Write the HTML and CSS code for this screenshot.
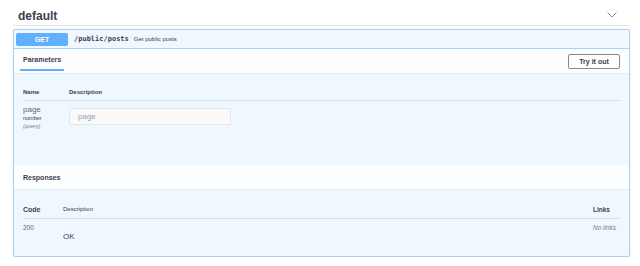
FILE: index.html
```html
<!DOCTYPE html>
<html lang="en">
<head>
    <meta charset="UTF-8">
    <title>Swagger - default</title>
    <link rel="stylesheet" href="styles.css">
</head>
<body>
    <div class="wrapper">
        <!-- tag header -->
        <h3 class="tag">
            <span class="tag-name">default</span>
            <svg class="chevron" width="10" height="6" viewBox="0 0 10 6" fill="none">
                <path d="M0.5 0.5L5 5L9.5 0.5" stroke="#6b6f78" stroke-width="0.8"/>
            </svg>
        </h3>

        <!-- GET /public/posts -->
        <div class="opblock">
            <div class="summary">
                <span class="method">GET</span>
                <span class="path">/public/posts</span>
                <span class="summary-desc">Get public posts</span>
            </div>

            <div class="section-header">
                <div class="tab">Parameters</div>
                <button class="try-out">Try it out</button>
            </div>

            <div class="params">
                <div class="params-head">
                    <div class="col-name">Name</div>
                    <div class="col-desc">Description</div>
                </div>
                <div class="param-row">
                    <div class="col-name">
                        <div class="param-name">page</div>
                        <div class="param-type">number</div>
                        <div class="param-in">(query)</div>
                    </div>
                    <div class="col-desc">
                        <input class="param-input" type="text" placeholder="page">
                    </div>
                </div>
            </div>

            <div class="section-header responses-header">
                <div class="section-title">Responses</div>
            </div>

            <div class="responses">
                <div class="resp-head">
                    <div class="col-code">Code</div>
                    <div class="col-rdesc">Description</div>
                    <div class="col-links">Links</div>
                </div>
                <div class="resp-row">
                    <div class="col-code code-val">200</div>
                    <div class="col-rdesc ok">OK</div>
                    <div class="col-links no-links">No links</div>
                </div>
            </div>
        </div>
    </div>
</body>
</html>
```

FILE: styles.css
```css
body {
    margin: 0;
    background: #ffffff;
    font-family: "Liberation Sans", Arial, sans-serif;
    color: #3b4151;
}

.wrapper {
    padding: 0 10px 0 13px;
}

/* tag header */
.tag {
    display: flex;
    align-items: center;
    justify-content: space-between;
    height: 25px;
    margin: 0;
    padding: 0 13px 0 5px;
    border-bottom: 1px solid #e6e7e9;
    font-size: 12px;
    font-weight: 700;
    color: #3b4151;
}

.tag-name {
    margin-top: 6px;
}

.chevron {
    margin-top: 4px;
}

/* operation block */
.opblock {
    margin-top: 3px;
    border: 1px solid #a9d2fd;
    border-radius: 2px;
    background: #eff7ff;
    box-shadow: 0 0 2px rgba(0, 0, 0, 0.12);
}

.summary {
    display: flex;
    align-items: center;
    height: 18px;
    padding: 0 2px;
    border-bottom: 1px solid #a9d2fd;
}

.method {
    width: 52px;
    height: 13px;
    line-height: 13px;
    border-radius: 2px;
    background: #61affe;
    color: #ffffff;
    font-size: 7px;
    font-weight: 700;
    text-align: center;
}

.path {
    margin-left: 6px;
    font-family: "DejaVu Sans Mono", "Liberation Mono", monospace;
    font-size: 7px;
    font-weight: 700;
    color: #3b4151;
}

.summary-desc {
    margin-left: 5px;
    font-size: 6px;
    color: #3b4151;
}

/* section headers */
.section-header {
    display: flex;
    align-items: center;
    justify-content: space-between;
    height: 24px;
    padding: 0 9px 0 6px;
    background: rgba(255, 255, 255, 0.85);
    box-shadow: 0 1px 1px rgba(0, 0, 0, 0.04);
}

.tab {
    align-self: stretch;
    display: flex;
    align-items: center;
    box-sizing: border-box;
    height: 22px;
    padding: 0 3px;
    border-bottom: 2px solid #61affe;
    font-size: 7px;
    font-weight: 700;
    color: #3b4151;
}

.responses-header {
    padding-left: 9px;
}

.section-title {
    font-size: 7px;
    font-weight: 700;
    color: #3b4151;
}

.try-out {
    width: 52px;
    height: 15px;
    padding: 0;
    border: 1px solid #888888;
    border-radius: 2px;
    background: transparent;
    font-family: inherit;
    font-size: 7px;
    font-weight: 700;
    color: #3b4151;
}

/* parameters */
.params {
    height: 92px;
    padding: 11px 9px 0 9px;
    box-sizing: border-box;
}

.params-head {
    display: flex;
    align-items: center;
    height: 16px;
    border-bottom: 1px solid #d8dde7;
    font-size: 6px;
    font-weight: 700;
}

.col-name {
    width: 46px;
    flex-shrink: 0;
}

.col-desc {
    flex: 1;
}

.param-row {
    display: flex;
    padding-top: 4px;
}

.param-name {
    font-size: 8px;
    line-height: 9px;
    color: #626875;
}

.param-type {
    margin-top: 1px;
    font-size: 5.5px;
    color: #3b4151;
}

.param-in {
    margin-top: 2px;
    font-size: 5.5px;
    font-style: italic;
    color: #808080;
}

.param-input {
    display: block;
    width: 162px;
    height: 17px;
    margin: 3px 0 0 0;
    padding: 0 8px;
    box-sizing: border-box;
    border: 1px solid #e4e7ea;
    border-radius: 2px;
    background: #fafafa;
    font-family: inherit;
    font-size: 8px;
    color: #3b4151;
    outline: none;
}

.param-input::placeholder {
    color: #9a9ea6;
}

/* responses */
.responses {
    height: 67px;
    padding: 11px 9px 0 9px;
    box-sizing: border-box;
}

.resp-head,
.resp-row {
    display: flex;
}

.resp-head {
    align-items: center;
    height: 18px;
    border-bottom: 1px solid #d8dde7;
}

.col-code {
    width: 40px;
    flex-shrink: 0;
}

.col-rdesc {
    flex: 1;
}

.col-links {
    width: 27px;
    flex-shrink: 0;
}

.resp-head .col-code {
    font-size: 7px;
    font-weight: 700;
}

.resp-head .col-rdesc {
    font-size: 6px;
    color: #3b4151;
}

.resp-head .col-links {
    font-size: 6.5px;
    font-weight: 700;
}

.resp-row {
    padding-top: 5px;
}

.code-val {
    font-size: 6.5px;
    color: #626875;
}

.ok {
    margin-top: 8px;
    font-size: 8px;
    color: #3b4151;
}

.no-links {
    font-size: 6.5px;
    font-style: italic;
    color: #7a7f8a;
}
```
